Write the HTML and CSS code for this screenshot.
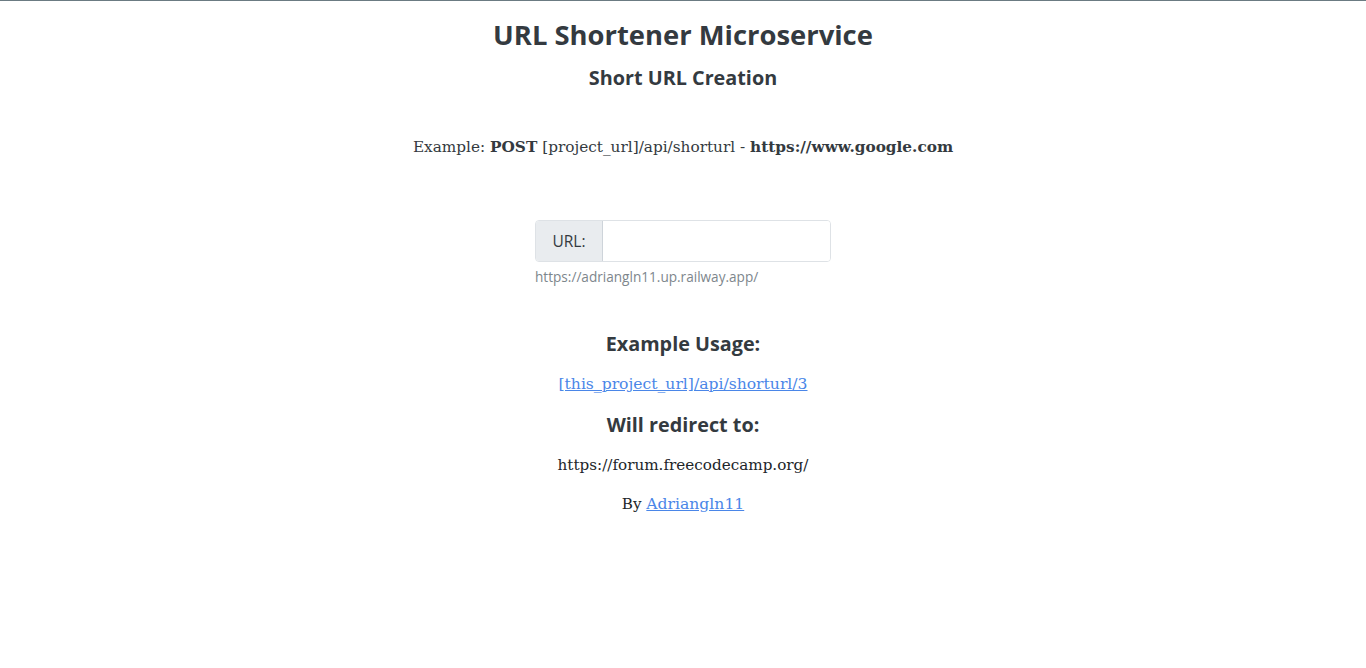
FILE: index.html
```html
<!DOCTYPE html>
<html>
<head>
<meta charset="utf-8">
<link rel="stylesheet" href="styles.css">
</head>
<body>
<div class="page">
  <h1 class="title">URL Shortener Microservice</h1>
  <h2 class="subtitle">Short URL Creation</h2>
  <p class="example">Example: <b>POST</b> [project_url]/api/shorturl - <b>https://www.google.com</b></p>
  <form class="form">
    <div class="input-group">
      <span class="label">URL:</span>
      <input class="field" type="text">
    </div>
    <small class="hint">https://adriangln11.up.railway.app/</small>
  </form>
  <h3 class="section">Example Usage:</h3>
  <p class="text"><a class="link" href="#">[this_project_url]/api/shorturl/3</a></p>
  <h3 class="section section-next">Will redirect to:</h3>
  <p class="text">https://forum.freecodecamp.org/</p>
  <p class="text by">By <a class="link" href="#">Adriangln11</a></p>
</div>
</body>
</html>
```

FILE: styles.css
```css
html, body {
  margin: 0;
  padding: 0;
  background: #fff;
}
body {
  border-top: 1px solid #6b7b82;
  font-family: "DejaVu Serif", Georgia, serif;
  color: #212529;
}
.page {
  display: flex;
  flex-direction: column;
  align-items: center;
  text-align: center;
}
.title {
  font-family: "Open Sans", "Noto Sans", sans-serif;
  font-weight: 700;
  font-size: 27.4px;
  color: #343a40;
  margin: 14px 0 0;
  line-height: 40px;
}
.subtitle {
  font-family: "Open Sans", "Noto Sans", sans-serif;
  font-weight: 700;
  font-size: 19.8px;
  color: #343a40;
  margin: 8px 0 0;
  line-height: 30px;
}
.example {
  font-size: 15.3px;
  margin: 42px 0 0;
  line-height: 24px;
  color: #343a40;
}
.example b {
  font-weight: bold;
}
.form {
  margin-top: 61px;
  display: flex;
  flex-direction: column;
  align-items: flex-start;
}
.input-group {
  display: flex;
  width: 296px;
  height: 42px;
  box-sizing: border-box;
  border: 1px solid #dee2e6;
  border-radius: 4px;
  overflow: hidden;
}
.label {
  font-family: "Open Sans", "Noto Sans", sans-serif;
  font-size: 15.5px;
  color: #343a40;
  background: #e9ecef;
  border-right: 1px solid #ced4da;
  width: 66px;
  display: flex;
  align-items: center;
  justify-content: center;
}
.field {
  flex: 1;
  border: none;
  outline: none;
  padding: 0 12px;
  font-size: 15px;
}
.hint {
  font-family: "Open Sans", "Noto Sans", sans-serif;
  font-size: 13.6px;
  color: #7d868c;
  margin-top: 6px;
  line-height: 18px;
}
.section {
  font-family: "Open Sans", "Noto Sans", sans-serif;
  font-weight: 700;
  font-size: 19.8px;
  color: #343a40;
  margin: 43px 0 0;
  line-height: 30px;
}
.section-next {
  margin-top: 14px;
}
.text {
  font-size: 15.2px;
  margin: 12px 0 0;
  line-height: 24px;
  color: #212529;
}
.section + .text {
  margin-top: 13px;
}
.text .link {
  font-size: 15.6px;
}
.by {
  margin-top: 15px;
}
.link {
  color: #4a86e8;
  text-decoration: underline;
}
```
